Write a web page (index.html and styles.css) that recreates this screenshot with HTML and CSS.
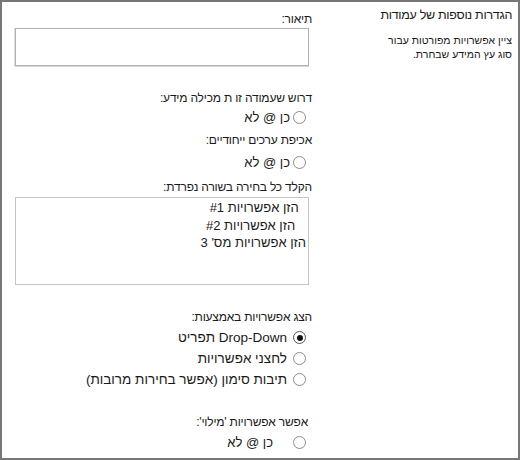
FILE: index.html
```html
<!DOCTYPE html>
<html lang="he" dir="rtl">
<head>
<meta charset="utf-8">
<title>הגדרות עמודה</title>
<link rel="stylesheet" href="styles.css">
</head>
<body>
<div class="frame">
  <aside class="side">
    <h2 class="side-title">הגדרות נוספות של עמודות</h2>
    <p class="side-desc">ציין אפשרויות מפורטות עבור סוג עץ המידע שבחרת.</p>
  </aside>
  <main class="main">
    <div class="label first">תיאור:</div>
    <textarea class="textbox"></textarea>

    <div class="label g1">דרוש שעמודה זו ת מכילה מידע:</div>
    <label class="radio-row r-small"><input type="radio" name="req"><span>כן @ לא</span></label>

    <div class="label g2">אכיפת ערכים ייחודיים:</div>
    <label class="radio-row r-small r2"><input type="radio" name="uniq"><span>כן @ לא</span></label>

    <div class="label g3">הקלד כל בחירה בשורה נפרדת:</div>
    <textarea class="choices">  הזן אפשרויות #1
   הזן אפשרויות #2
הזן אפשרויות מס' 3</textarea>

    <div class="label g4">הצג אפשרויות באמצעות:</div>
    <div class="options">
      <label class="radio-row r-big"><input type="radio" name="disp" checked><span>Drop-Down תפריט</span></label>
      <label class="radio-row r-big"><input type="radio" name="disp"><span>לחצני אפשרויות</span></label>
      <label class="radio-row r-big"><input type="radio" name="disp"><span>תיבות סימון (אפשר בחירות מרובות)</span></label>
    </div>

    <div class="label g5">אפשר אפשרויות 'מילוי':</div>
    <label class="radio-row r-small r-wide"><input type="radio" name="fill"><span>כן @ לא</span></label>
  </main>
</div>
</body>
</html>
```
FILE: styles.css
```css
* { box-sizing: border-box; }
html, body { margin: 0; padding: 0; background: #fff; }
body {
  font-family: "Liberation Sans", "DejaVu Sans", Arial, sans-serif;
  color: #1a1a1a;
  direction: rtl;
}
.frame {
  width: 520px;
  height: 460px;
  border: 2px solid #777;
  display: flex;
  flex-direction: row;
  overflow: hidden;
}
.side {
  width: 196px;
  padding: 5px 6px 0 0;
  flex: none;
}
.side-title {
  margin: 0;
  font-size: 12.5px;
  letter-spacing: -0.3px;
  font-weight: normal;
  line-height: 16px;
  color: #1a1a1a;
}
.side-desc {
  margin: 11px 0 0 0;
  width: 128px;
  font-size: 10.5px;
  line-height: 13.5px;
  color: #1a1a1a;
}
.main {
  flex: 1;
  padding: 0 10px;
  display: flex;
  flex-direction: column;
  align-items: stretch;
}
.label {
  font-size: 12px;
  line-height: 16px;
  height: 16px;
  white-space: nowrap;
  letter-spacing: -0.2px;
}
.label.first { margin-top: 9px; }
.label.g1 { margin-top: 24px; }
.label.g2 { margin-top: 5px; }
.label.g3 { margin-top: 7px; }
.label.g4 { margin-top: 24px; }
.label.g5 { margin-top: 24px; padding-right: 4px; }

.textbox {
  display: block;
  margin: 1px 3px 0 3px;
  height: 38px;
  border: 1px solid #b3b3b3;
  box-shadow: 0 1px 0 #d6d6d6, -1px 0 0 #dcdcdc;
  resize: none;
  background: #fff;
}
.choices {
  display: block;
  margin: 2px 3px 0 3px;
  height: 88px;
  border: 1px solid #c4c4c4;
  resize: none;
  padding: 1px 2px 0 4px;
  font-family: "Liberation Sans", "DejaVu Sans", Arial, sans-serif;
  font-size: 13px;
  line-height: 17.5px;
  color: #1a1a1a;
  white-space: pre;
  overflow: hidden;
  background: #fff;
}
.radio-row {
  display: flex;
  align-items: center;
  height: 20px;
  padding-right: 6px;
  white-space: nowrap;
}
.radio-row input {
  -webkit-appearance: none;
  appearance: none;
  width: 13px;
  height: 13px;
  margin: 0;
  border: 1px solid #8c8c8c;
  border-radius: 50%;
  background: #fff;
  flex: none;
  position: relative;
}
.radio-row input:checked {
  border-color: #555;
}
.radio-row input:checked::after {
  content: "";
  position: absolute;
  width: 6px;
  height: 6px;
  border-radius: 50%;
  background: #111;
  top: 2.5px;
  left: 2.5px;
}
.r-small { font-size: 13px; margin-top: 1px; }
.r-small span { margin-right: 3px; }
.r2 { margin-top: 4px; }
.r-wide { margin-top: 2px; }
.r-wide span { margin-right: 20px; }
.options { margin-top: 2px; }
.r-big { font-size: 13.5px; height: 21px; }
.r-big span { margin-right: 6px; }
```
